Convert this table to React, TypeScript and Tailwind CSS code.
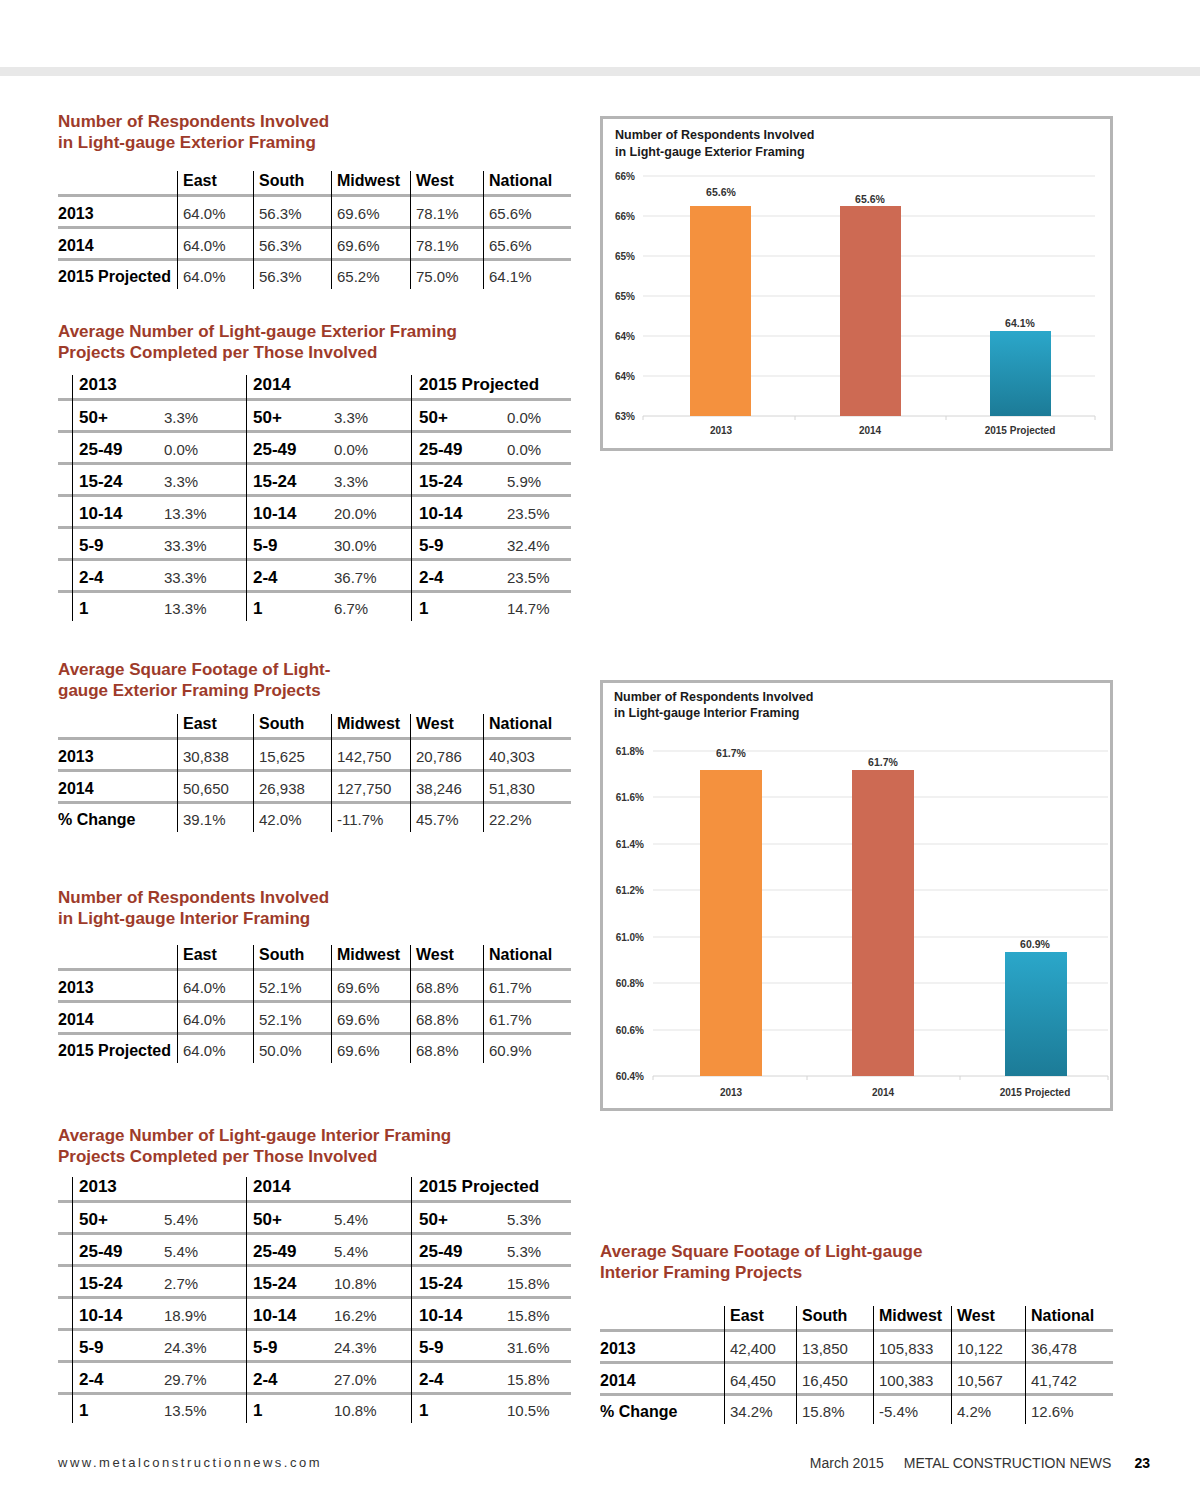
import React from 'react'

const regionGrid = 'grid-cols-[119px_76px_78px_79px_73px_88px]'
const regionGridRight = 'grid-cols-[124px_72px_77px_78px_74px_88px]'
const bucketGrid = 'grid-cols-[14px_174px_165px_160px]'
const bucketLabelW = ['w-[91px] pl-[6px]', 'w-[87px] pl-[6px]', 'w-[95px] pl-[7px]']
const buckets = ['50+', '25-49', '15-24', '10-14', '5-9', '2-4', '1']
const heads = ['East', 'South', 'Midwest', 'West', 'National']

function Title({ lines, className }: { lines: string[]; className?: string }) {
  return (
    <div className={`text-[17px] font-bold leading-[21px] text-[#9e3b2a] ${className ?? ''}`}>
      {lines.map((l) => (
        <div key={l}>{l}</div>
      ))}
    </div>
  )
}

function Rule({ grid, n }: { grid: string; n: number }) {
  return (
    <div className={`grid h-[3px] ${grid}`}>
      {Array.from({ length: n }).map((_, i) => (
        <div key={i} className={i === 0 ? 'bg-[#b0b0b0]' : 'border-l border-black bg-[#b0b0b0]'} />
      ))}
    </div>
  )
}

function RegionTable({ grid, rows, className }: { grid: string; rows: string[][]; className?: string }) {
  return (
    <div className={className}>
      <div className={`grid h-[23px] ${grid}`}>
        <div />
        {heads.map((h) => (
          <div key={h} className="border-l border-black pl-[5px] pt-[1px] text-[16px] font-bold leading-[18px] text-black">
            {h}
          </div>
        ))}
      </div>
      {rows.map((r, i) => (
        <React.Fragment key={r[0]}>
          <Rule grid={grid} n={6} />
          <div className={`grid ${grid} ${i === rows.length - 1 ? 'h-[28px]' : 'h-[29px]'}`}>
            <div className="flex items-center pt-[4px] text-[16px] font-bold leading-[18px] text-black">{r[0]}</div>
            {r.slice(1).map((v, j) => (
              <div key={j} className="flex items-center border-l border-black pl-[5px] pt-[4px] text-[15px] font-light leading-[18px] text-[#333]">
                {v}
              </div>
            ))}
          </div>
        </React.Fragment>
      ))}
    </div>
  )
}

function BucketTable({ groups, className }: { groups: string[][]; className?: string }) {
  const years = ['2013', '2014', '2015 Projected']
  return (
    <div className={className}>
      <div className={`grid h-[23px] ${bucketGrid}`}>
        <div />
        {years.map((y, g) => (
          <div key={y} className={`border-l border-black pt-[1px] text-[17px] font-bold leading-[18px] text-black ${g === 2 ? 'pl-[7px]' : 'pl-[6px]'}`}>
            {y}
          </div>
        ))}
      </div>
      {buckets.map((b, i) => (
        <React.Fragment key={b}>
          <Rule grid={bucketGrid} n={4} />
          <div className={`grid ${bucketGrid} ${i === buckets.length - 1 ? 'h-[28px]' : 'h-[29px]'}`}>
            <div />
            {groups.map((vals, g) => (
              <div key={g} className="flex items-center border-l border-black pt-[4px]">
                <div className="flex items-baseline leading-[18px]">
                  <span className={`text-[17px] font-bold text-black ${bucketLabelW[g]}`}>{b}</span>
                  <span className="text-[15px] font-light text-[#333]">{vals[i]}</span>
                </div>
              </div>
            ))}
          </div>
        </React.Fragment>
      ))}
    </div>
  )
}

type Bar = { x: number; y: number; w: number; label: string; lx: number; ly: number; fill: string; cat: string }

function BarChart({
  id,
  width,
  height,
  gridX,
  gridY,
  axisY,
  ticks,
  yLabels,
  labelX,
  bars,
  catY,
}: {
  id: string
  width: number
  height: number
  gridX: [number, number]
  gridY: number[]
  axisY: number
  ticks: number[]
  yLabels: string[]
  labelX: number
  bars: Bar[]
  catY: number
}) {
  return (
    <svg width={width} height={height} viewBox={`0 0 ${width} ${height}`} className="block" fontFamily="'Liberation Sans', Arial, sans-serif">
      <defs>
        <linearGradient id={`teal-${id}`} x1="0" y1="0" x2="0" y2="1">
          <stop offset="0" stopColor="#2ba7ca" />
          <stop offset="1" stopColor="#1c7b97" />
        </linearGradient>
      </defs>
      {gridY.map((y) => (
        <line key={y} x1={gridX[0]} x2={gridX[1]} y1={y} y2={y} stroke="#e3e3e3" strokeWidth="1" />
      ))}
      <line x1={gridX[0]} x2={gridX[1]} y1={axisY} y2={axisY} stroke="#d4d4d4" strokeWidth="1" />
      {ticks.map((t) => (
        <line key={t} x1={t} x2={t} y1={axisY} y2={axisY + 4} stroke="#d4d4d4" strokeWidth="1" />
      ))}
      {[...gridY, axisY].map((y, i) => (
        <text key={i} x={labelX} y={y + 3.5} textAnchor="end" fontSize="10" fontWeight="700" fill="#333">
          {yLabels[i]}
        </text>
      ))}
      {bars.map((b) => (
        <g key={b.cat}>
          <rect x={b.x} y={b.y} width={b.w} height={axisY - b.y} fill={b.fill === 'teal' ? `url(#teal-${id})` : b.fill} />
          <text x={b.lx} y={b.ly + 3.5} textAnchor="middle" fontSize="10.5" fontWeight="700" fill="#333">
            {b.label}
          </text>
          <text x={b.lx} y={catY + 3.5} textAnchor="middle" fontSize="10" fontWeight="700" fill="#333">
            {b.cat}
          </text>
        </g>
      ))}
    </svg>
  )
}

function ChartBox({ title, className, titleCls, children }: { title: string[]; className: string; titleCls: string; children: React.ReactNode }) {
  return (
    <div className={`w-[513px] border-[3px] border-[#b5b5b5] bg-white ${className}`}>
      <div className={`text-[12.5px] font-bold text-[#1a1a1a] ${titleCls}`}>
        {title.map((t) => (
          <div key={t}>{t}</div>
        ))}
      </div>
      {children}
    </div>
  )
}

export default function App() {
  return (
    <div className="w-[1200px] bg-white font-['Liberation_Sans',Arial,sans-serif] text-black">
      <div className="mt-[67px] h-[9px] bg-[#e8e8e8]" />

      <div className="flex">
        {/* left column */}
        <div className="ml-[58px] w-[513px]">
          <Title className="mt-[34.5px]" lines={['Number of Respondents Involved', 'in Light-gauge Exterior Framing']} />
          <RegionTable
            className="mt-[18.5px]"
            grid={regionGrid}
            rows={[
              ['2013', '64.0%', '56.3%', '69.6%', '78.1%', '65.6%'],
              ['2014', '64.0%', '56.3%', '69.6%', '78.1%', '65.6%'],
              ['2015 Projected', '64.0%', '56.3%', '65.2%', '75.0%', '64.1%'],
            ]}
          />

          <Title className="mt-[31.5px]" lines={['Average Number of Light-gauge Exterior Framing', 'Projects Completed per Those Involved']} />
          <BucketTable
            className="mt-[12.5px]"
            groups={[
              ['3.3%', '0.0%', '3.3%', '13.3%', '33.3%', '33.3%', '13.3%'],
              ['3.3%', '0.0%', '3.3%', '20.0%', '30.0%', '36.7%', '6.7%'],
              ['0.0%', '0.0%', '5.9%', '23.5%', '32.4%', '23.5%', '14.7%'],
            ]}
          />

          <Title className="mt-[37.5px]" lines={['Average Square Footage of Light-', 'gauge Exterior Framing Projects']} />
          <RegionTable
            className="mt-[13.5px]"
            grid={regionGrid}
            rows={[
              ['2013', '30,838', '15,625', '142,750', '20,786', '40,303'],
              ['2014', '50,650', '26,938', '127,750', '38,246', '51,830'],
              ['% Change', '39.1%', '42.0%', '-11.7%', '45.7%', '22.2%'],
            ]}
          />

          <Title className="mt-[54.5px]" lines={['Number of Respondents Involved', 'in Light-gauge Interior Framing']} />
          <RegionTable
            className="mt-[16.5px]"
            grid={regionGrid}
            rows={[
              ['2013', '64.0%', '52.1%', '69.6%', '68.8%', '61.7%'],
              ['2014', '64.0%', '52.1%', '69.6%', '68.8%', '61.7%'],
              ['2015 Projected', '64.0%', '50.0%', '69.6%', '68.8%', '60.9%'],
            ]}
          />

          <Title className="mt-[61.5px]" lines={['Average Number of Light-gauge Interior Framing', 'Projects Completed per Those Involved']} />
          <BucketTable
            className="mt-[10.5px]"
            groups={[
              ['5.4%', '5.4%', '2.7%', '18.9%', '24.3%', '29.7%', '13.5%'],
              ['5.4%', '5.4%', '10.8%', '16.2%', '24.3%', '27.0%', '10.8%'],
              ['5.3%', '5.3%', '15.8%', '15.8%', '31.6%', '15.8%', '10.5%'],
            ]}
          />
        </div>

        {/* right column */}
        <div className="ml-[29px] w-[513px]">
          <ChartBox
            title={['Number of Respondents Involved', 'in Light-gauge Exterior Framing']}
            className="mt-[40px] h-[335px]"
            titleCls="pl-[12px] pt-[8px] leading-[17px]"
          >
            <BarChart
              id="ext"
              width={507}
              height={287}
              gridX={[40, 492]}
              gridY={[15, 55, 95, 135, 175, 215]}
              axisY={255}
              ticks={[40, 192, 343, 492]}
              yLabels={['66%', '66%', '65%', '65%', '64%', '64%', '63%']}
              labelX={32}
              catY={269}
              bars={[
                { x: 87, y: 45, w: 61, label: '65.6%', lx: 118, ly: 31, fill: '#f4913e', cat: '2013' },
                { x: 237, y: 45, w: 61, label: '65.6%', lx: 267, ly: 38, fill: '#cd6a53', cat: '2014' },
                { x: 387, y: 170, w: 61, label: '64.1%', lx: 417, ly: 162, fill: 'teal', cat: '2015 Projected' },
              ]}
            />
          </ChartBox>

          <ChartBox
            title={['Number of Respondents Involved', 'in Light-gauge Interior Framing']}
            className="mt-[229px] h-[431px]"
            titleCls="pl-[11px] pt-[6px] leading-[16px]"
          >
            <BarChart
              id="int"
              width={507}
              height={387}
              gridX={[50, 505]}
              gridY={[30, 76, 123, 169, 216, 262, 309]}
              axisY={355}
              ticks={[50, 204, 357, 505]}
              yLabels={['61.8%', '61.6%', '61.4%', '61.2%', '61.0%', '60.8%', '60.6%', '60.4%']}
              labelX={41}
              catY={371}
              bars={[
                { x: 97, y: 49, w: 62, label: '61.7%', lx: 128, ly: 32, fill: '#f4913e', cat: '2013' },
                { x: 249, y: 49, w: 62, label: '61.7%', lx: 280, ly: 41, fill: '#cd6a53', cat: '2014' },
                { x: 402, y: 231, w: 62, label: '60.9%', lx: 432, ly: 223, fill: 'teal', cat: '2015 Projected' },
              ]}
            />
          </ChartBox>

          <Title className="mt-[129.5px]" lines={['Average Square Footage of Light-gauge', 'Interior Framing Projects']} />
          <RegionTable
            className="mt-[23.5px]"
            grid={regionGridRight}
            rows={[
              ['2013', '42,400', '13,850', '105,833', '10,122', '36,478'],
              ['2014', '64,450', '16,450', '100,383', '10,567', '41,742'],
              ['% Change', '34.2%', '15.8%', '-5.4%', '4.2%', '12.6%'],
            ]}
          />
        </div>
      </div>

      {/* footer */}
      <div className="mt-[29px] flex items-center justify-between pl-[58px] pr-[50px] leading-[20px] text-[#333]">
        <span className="text-[13px] tracking-[2.5px]">www.metalconstructionnews.com</span>
        <div className="flex items-center text-[14px]">
          <span>March 2015</span>
          <span className="ml-[20px]">METAL CONSTRUCTION NEWS</span>
          <span className="ml-[23px] font-bold text-black">23</span>
        </div>
      </div>
    </div>
  )
}
